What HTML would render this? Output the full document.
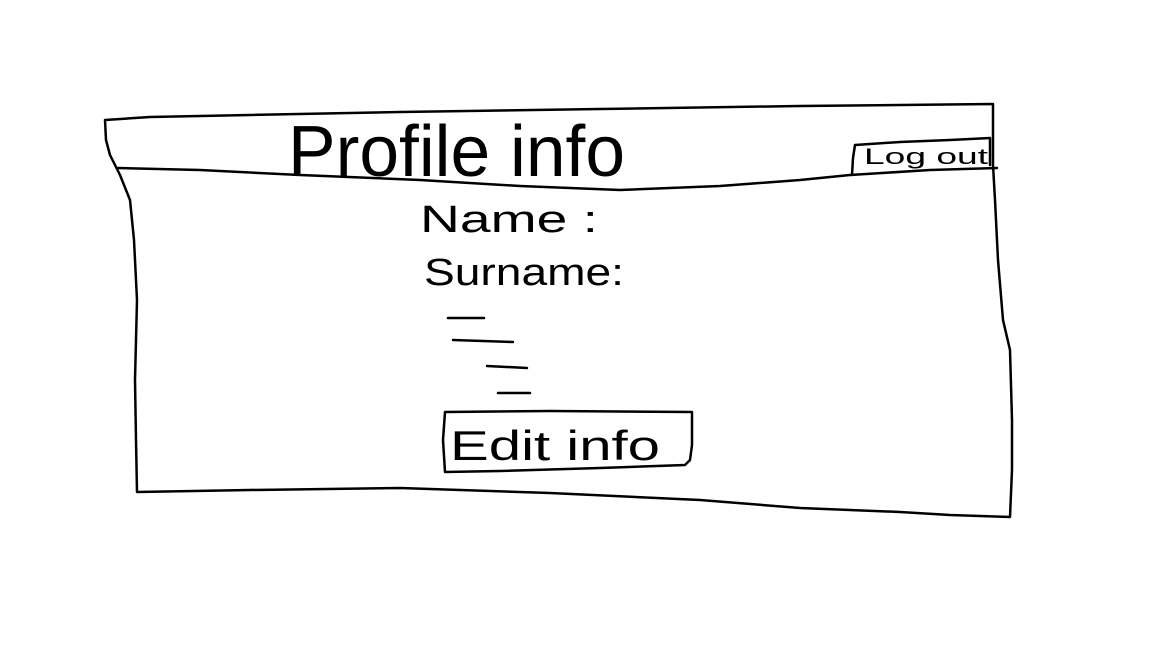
<!DOCTYPE html>
<html><head><meta charset="utf-8"><style>
html,body{margin:0;padding:0;background:#fff;width:1152px;height:648px;overflow:hidden}
svg{display:block}
text{font-family:"Liberation Sans",sans-serif;fill:#000}
</style></head><body>
<svg width="1152" height="648" viewBox="0 0 1152 648" xmlns="http://www.w3.org/2000/svg">
<g fill="none" stroke="#000" stroke-width="2.5" stroke-linecap="round" stroke-linejoin="round">
<polyline points="105,120 150,117 250,115 400,112 600,109 800,106 993,104 993,165 995,200 998,260 1003,320 1010,350 1012,420 1012,470 1010,517 950,515 900,512 800,508 700,500 550,493 400,488 250,490 137,492 136,440 135,380 137,300 134,240 130,200 120,175 110,155 106,140 105,120"/>
<polyline points="118,168 200,170 300,175 420,180 520,186 620,190 720,186 800,180 850,175 930,170 997,168"/>
<polyline points="852,175 853,158 855,145 900,142 950,140 990,138 990,165"/>
<line x1="448" y1="318" x2="484" y2="318"/>
<line x1="453" y1="340" x2="513" y2="342"/>
<line x1="487" y1="366" x2="527" y2="368"/>
<line x1="498" y1="393" x2="530" y2="393"/>
<polyline points="445,412 550,411 692,412 692,445 690,460 685,465 600,468 500,471 445,472 443,440 445,412"/>
</g>
<text x="288" y="176" font-size="72" textLength="337" lengthAdjust="spacingAndGlyphs">Profile info</text>
<text x="864" y="164" font-size="22" textLength="124" lengthAdjust="spacingAndGlyphs">Log out</text>
<text x="420" y="232" font-size="38" textLength="178" lengthAdjust="spacingAndGlyphs">Name :</text>
<text x="424" y="285" font-size="38" textLength="200" lengthAdjust="spacingAndGlyphs">Surname:</text>
<text x="450" y="460" font-size="42" textLength="210" lengthAdjust="spacingAndGlyphs">Edit info</text>
</svg>
</body></html>
